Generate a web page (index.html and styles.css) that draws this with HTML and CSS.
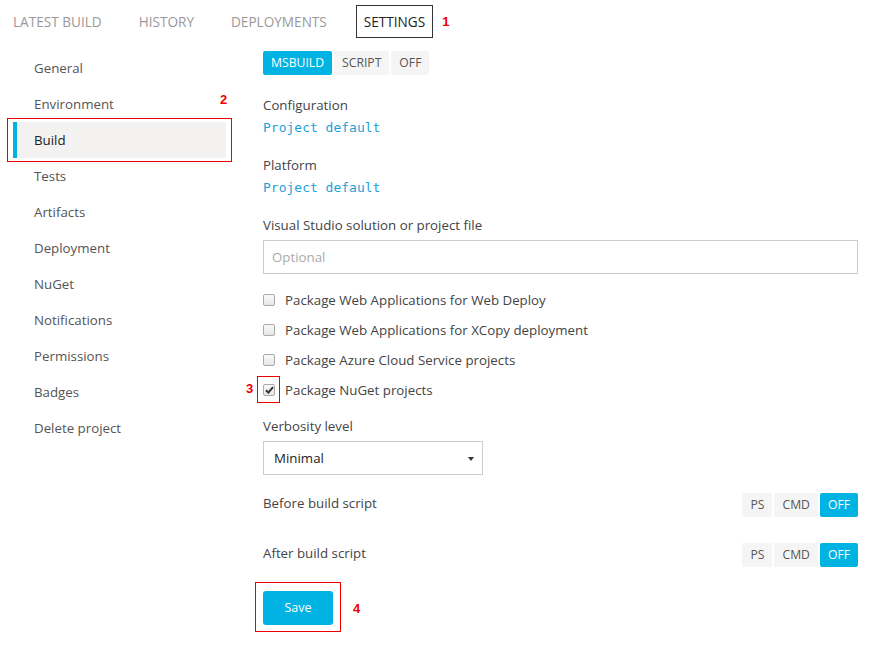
FILE: index.html
```html
<!DOCTYPE html>
<html>
<head>
<meta charset="utf-8">
<link rel="stylesheet" href="styles.css">
</head>
<body>
<nav class="tabs">
  <span class="tab">LATEST BUILD</span>
  <span class="tab">HISTORY</span>
  <span class="tab">DEPLOYMENTS</span>
  <span class="tab active">SETTINGS</span>
  <span class="mark mark1">1</span>
</nav>
<div class="page">
  <aside class="side">
    <div class="item">General</div>
    <div class="item">Environment<span class="mark mark2">2</span></div>
    <div class="item sel"><span class="selbox"></span>Build</div>
    <div class="item">Tests</div>
    <div class="item">Artifacts</div>
    <div class="item">Deployment</div>
    <div class="item">NuGet</div>
    <div class="item">Notifications</div>
    <div class="item">Permissions</div>
    <div class="item">Badges</div>
    <div class="item">Delete project</div>
  </aside>
  <main class="main">
    <div class="seg">
      <span class="btn on">MSBUILD</span><span class="btn">SCRIPT</span><span class="btn">OFF</span>
    </div>
    <div class="field">
      <div class="label">Configuration</div>
      <div class="code">Project default</div>
    </div>
    <div class="field">
      <div class="label">Platform</div>
      <div class="code">Project default</div>
    </div>
    <div class="field vs">
      <div class="label">Visual Studio solution or project file</div>
      <div class="input">Optional</div>
    </div>
    <div class="checks">
      <div class="check"><span class="box"></span>Package Web Applications for Web Deploy</div>
      <div class="check"><span class="box"></span>Package Web Applications for XCopy deployment</div>
      <div class="check"><span class="box"></span>Package Azure Cloud Service projects</div>
      <div class="check"><span class="box checked"><svg width="9" height="8" viewBox="0 0 9 8"><path d="M1 4.2 L3.4 6.6 L8 1.2" fill="none" stroke="#333" stroke-width="2"/></svg></span>Package NuGet projects<span class="cbox"></span><span class="mark mark3">3</span></div>
    </div>
    <div class="field verb">
      <div class="label">Verbosity level</div>
      <div class="select">Minimal<span class="caret"></span></div>
    </div>
    <div class="row">
      <div class="label">Before build script</div>
      <div class="seg small"><span class="btn">PS</span><span class="btn">CMD</span><span class="btn on">OFF</span></div>
    </div>
    <div class="row">
      <div class="label">After build script</div>
      <div class="seg small"><span class="btn">PS</span><span class="btn">CMD</span><span class="btn on">OFF</span></div>
    </div>
    <div class="savewrap">
      <span class="save">Save</span>
      <span class="savebox"></span>
      <span class="mark mark4">4</span>
    </div>
  </main>
</div>
</body>
</html>
```

FILE: styles.css
```css
* { box-sizing: border-box; }
body {
  margin: 0;
  width: 890px;
  height: 648px;
  background: #fff;
  font-family: "Open Sans", "Noto Sans", sans-serif;
  font-size: 13.3px;
  color: #333;
  overflow: hidden;
}
.tabs {
  display: flex;
  align-items: center;
  height: 42px;
  padding-left: 13px;
  position: relative;
}
.tab {
  color: #999;
  font-size: 13.6px;
  margin-right: 37px;
}
.tab.active {
  color: #222;
  border: 1px solid #333;
  height: 33px;
  line-height: 31px;
  padding: 0 7px;
  margin-left: -8px;
  margin-right: 9px;
}
.mark {
  color: #e00;
  font-weight: bold;
  font-family: "Liberation Sans", Arial, sans-serif;
  font-size: 13px;
}
.page {
  display: flex;
}
.side {
  width: 263px;
  flex: none;
  padding-top: 8px;
  padding-left: 13px;
}
.item {
  height: 36px;
  line-height: 36px;
  padding-left: 21px;
  color: #555;
  width: 213px;
  position: relative;
}
.mark2 {
  position: absolute;
  left: 207px;
  top: -4px;
}
.item.sel {
  background: #f3f2f1;
  border-left: 4px solid #00b3e3;
  padding-left: 17px;
  color: #222;
}
.selbox {
  position: absolute;
  left: -10px;
  top: -4px;
  width: 225px;
  height: 44px;
  border: 1px solid #e00;
}
.main {
  flex: 1;
  padding-top: 9px;
  padding-right: 32px;
}
.seg {
  display: flex;
  gap: 2px;
}
.btn {
  background: #f5f5f5;
  color: #555;
  font-size: 12.2px;
  height: 24px;
  line-height: 24px;
  padding: 0 8px;
  border-radius: 2px;
}
.btn.on {
  background: #00b3e3;
  color: #fff;
}
.field { margin-top: 21px; }
.field + .field { margin-top: 20px; }
.label {
  color: #444;
  line-height: 18px;
}
.code {
  font-family: "DejaVu Sans Mono", monospace;
  font-size: 13px;
  color: #1e9fd6;
  margin-top: 5px;
  line-height: 17px;
}
.field.vs .label { margin-bottom: 6px; }
.input {
  height: 34px;
  border: 1px solid #ccc;
  line-height: 32px;
  padding-left: 8px;
  color: #aaa;
}
.checks { margin-top: 11px; }
.check {
  height: 30px;
  display: flex;
  align-items: center;
  color: #444;
  position: relative;
}
.box {
  width: 12px;
  height: 12px;
  border: 1px solid #aaa;
  border-radius: 2px;
  background: linear-gradient(#fafafa, #e6e6e6);
  margin-right: 10px;
  display: flex;
  align-items: center;
  justify-content: center;
}
.cbox {
  position: absolute;
  left: -6px;
  top: 1px;
  width: 23px;
  height: 27px;
  border: 1px solid #e00;
}
.mark3 {
  position: absolute;
  left: -17px;
  top: 6px;
}
.field.verb { margin-top: 12px; }
.verb .label { margin-bottom: 6px; }
.select {
  width: 220px;
  height: 34px;
  border: 1px solid #ccc;
  line-height: 32px;
  padding-left: 10px;
  color: #222;
  position: relative;
}
.caret {
  position: absolute;
  right: 8px;
  top: 15px;
  border-left: 3px solid transparent;
  border-right: 3px solid transparent;
  border-top: 4px solid #333;
}
.row {
  display: flex;
  justify-content: space-between;
  align-items: flex-start;
  height: 50px;
}
.verb + .row { margin-top: 18px; }
.row .label { margin-top: 1px; }
.small .btn { padding: 0 8px; }
.savewrap {
  position: relative;
  margin-top: -2px;
  height: 40px;
}
.save {
  display: inline-block;
  background: #00b3e3;
  color: #fff;
  width: 70px;
  height: 34px;
  line-height: 34px;
  text-align: center;
  border-radius: 3px;
  font-size: 12.5px;
}
.savebox {
  position: absolute;
  left: -8px;
  top: -9px;
  width: 86px;
  height: 50px;
  border: 1px solid #e00;
}
.mark4 {
  position: absolute;
  left: 90px;
  top: 10px;
}
```
